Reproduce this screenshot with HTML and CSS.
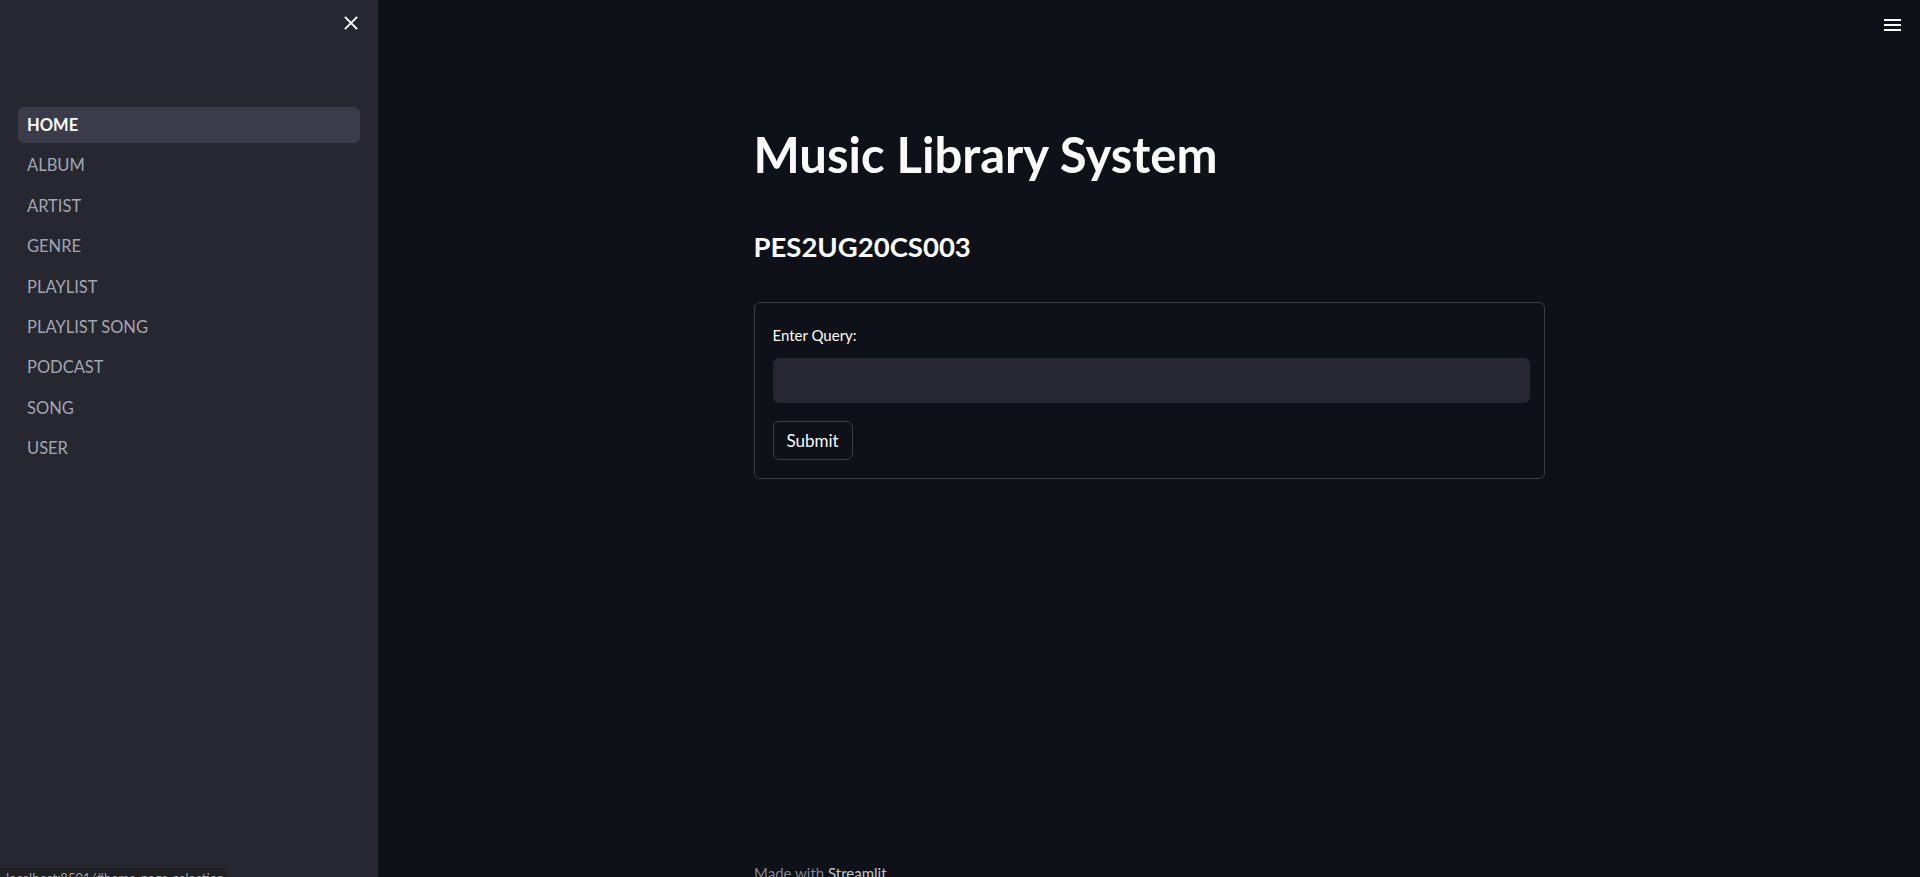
FILE: index.html
```html
<!DOCTYPE html>
<html>
<head>
<meta charset="utf-8">
<link rel="stylesheet" href="styles.css">
</head>
<body>
<div class="app">
  <aside class="sidebar">
    <div class="side-top">
      <svg class="close" width="14" height="14" viewBox="0 0 14 14"><path d="M1.5 1.5 L12.5 12.5 M12.5 1.5 L1.5 12.5" stroke="#fafafa" stroke-width="1.8" stroke-linecap="square"/></svg>
    </div>
    <nav class="nav">
      <div class="nav-item active">HOME</div>
      <div class="nav-item">ALBUM</div>
      <div class="nav-item">ARTIST</div>
      <div class="nav-item">GENRE</div>
      <div class="nav-item">PLAYLIST</div>
      <div class="nav-item">PLAYLIST SONG</div>
      <div class="nav-item">PODCAST</div>
      <div class="nav-item">SONG</div>
      <div class="nav-item">USER</div>
    </nav>
    <div class="status">localhost:8501/#home-page-selection</div>
  </aside>
  <main class="main">
    <div class="menu">
      <svg width="17" height="13" viewBox="0 0 17 13"><rect x="0" y="1" width="17" height="2" fill="#fafafa"/><rect x="0" y="6" width="17" height="2" fill="#fafafa"/><rect x="0" y="11" width="17" height="2" fill="#fafafa"/></svg>
    </div>
    <div class="block">
      <h1 class="title">Music Library System</h1>
      <h3 class="subtitle">PES2UG20CS003</h3>
      <div class="form">
        <label class="label">Enter Query:</label>
        <div class="input"></div>
        <button class="btn">Submit</button>
      </div>
    </div>
    <footer class="footer">Made with <span class="brand">Streamlit</span></footer>
  </main>
</div>
</body>
</html>
```
FILE: styles.css
```css
html, body {
  margin: 0;
  padding: 0;
  height: 100%;
  overflow: hidden;
}
body {
  background: #0e1117;
  color: #fafafa;
  font-family: Lato, "Open Sans", sans-serif;
}
.app {
  display: flex;
  height: 877px;
}
.sidebar {
  width: 378px;
  flex: 0 0 378px;
  background: #262730;
  position: relative;
  box-sizing: border-box;
  padding: 0 18px;
}
.side-top {
  height: 107px;
  display: flex;
  justify-content: flex-end;
  align-items: flex-start;
}
.close {
  margin-top: 16px;
  margin-right: 2px;
}
.nav {
  display: flex;
  flex-direction: column;
  gap: 4.4px;
}
.nav-item {
  height: 36px;
  line-height: 36px;
  padding-left: 9px;
  border-radius: 6px;
  font-size: 16.5px;
  color: #a3a6b1;
}
.nav-item.active {
  background: #3b3c49;
  color: #fafafa;
  font-weight: 700;
}
.status {
  position: absolute;
  left: 0;
  bottom: -10px;
  width: 227px;
  height: 19px;
  box-sizing: border-box;
  background: #202125;
  border-top-right-radius: 4px;
  color: #9aa0a6;
  font-size: 13px;
  padding: 2px 0 0 6px;
  white-space: nowrap;
  overflow: hidden;
}
.main {
  flex: 1;
  position: relative;
  display: flex;
  flex-direction: column;
  align-items: center;
}
.menu {
  position: absolute;
  top: 15px;
  right: 19px;
}
.block {
  width: 791px;
  padding-top: 124px;
}
.title {
  margin: 0;
  font-size: 49px;
  line-height: 60px;
  font-weight: 700;
}
.subtitle {
  margin: 46px 0 0 0;
  font-size: 27.5px;
  line-height: 34px;
  font-weight: 700;
}
.form {
  margin-top: 38px;
  border: 1px solid #3c3d44;
  border-radius: 6px;
  padding: 18px 14px 18px 18px;
  display: flex;
  flex-direction: column;
  align-items: flex-start;
}
.label {
  font-size: 15px;
  line-height: 20px;
  margin-top: 4px;
}
.input {
  margin-top: 13px;
  align-self: stretch;
  height: 45px;
  background: #262730;
  border-radius: 6px;
}
.btn {
  margin-top: 18px;
  height: 39px;
  padding: 0 13px;
  background: #0e1117;
  color: #fafafa;
  border: 1px solid #3c3d44;
  border-radius: 6px;
  font-family: Lato, "Open Sans", sans-serif;
  font-size: 17px;
}
.footer {
  position: absolute;
  top: 864px;
  left: calc(50% - 395px);
  font-size: 15px;
  color: #808495;
}
.brand {
  color: #c5c7cf;
}
```
